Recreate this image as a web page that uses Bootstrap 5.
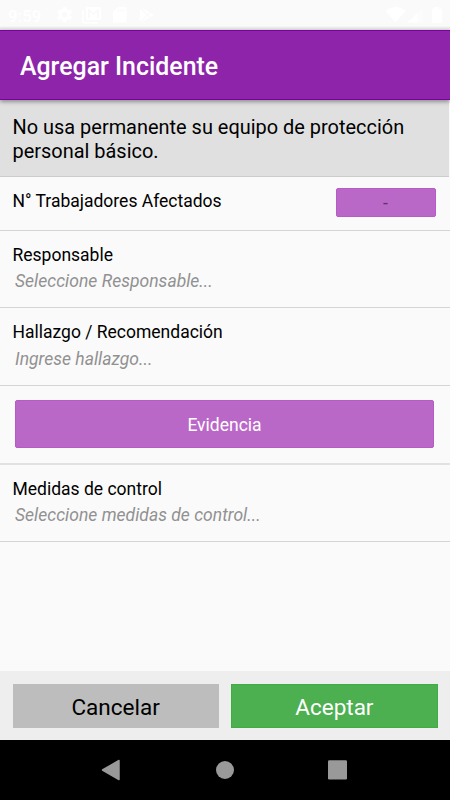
<!DOCTYPE html>
<html lang="es">
<head>
<meta charset="utf-8">
<meta name="viewport" content="width=device-width, initial-scale=1">
<title>Agregar Incidente</title>
<link href="https://cdn.jsdelivr.net/npm/bootstrap@5.3.0/dist/css/bootstrap.min.css" rel="stylesheet">
<style>
body{font-family:Roboto,"Liberation Sans",sans-serif;background:#fafafa;color:#000;height:800px;overflow:hidden}
.status-bar{height:30px;color:#fff;background:linear-gradient(#fafafa 26px,#f0f0f0 27px,#dcdcdc 30px)}
.status-bar svg{display:block;width:100%;height:30px}
.app-header{height:70px;padding:3px 20px 0;background:#8e24aa;color:#fff;border:solid #7b00a0;border-width:1px 0;box-shadow:0 2px 4px rgba(0,0,0,.36);z-index:1}
.app-title{font-size:24.9px;font-weight:500;line-height:30px}
.incident{height:77px;margin-right:1px;padding:15px 12.5px 0;background:#e0e0e0;border-bottom:1px solid #ccc;font-size:19.95px;line-height:24px}
.field{border-bottom:1px solid #d4d4d4;padding:0 12.5px;font-size:17.5px;line-height:24px}
.field-count{height:54px}
.field-text{height:77px;padding-top:12px}
.field-finding{height:78px}
.field-finding .hint{margin-top:3px}
.field-media{height:79px;padding:14px 16px 0 15px;border-bottom:2px solid #e2e2e2}
.hint{font-style:italic;color:#919191;padding-left:2.5px;margin-top:2px;letter-spacing:.02px}
.btn-lilac{--bs-btn-bg:#ba68c8;--bs-btn-color:#fff;--bs-btn-border-color:#b75cc7;--bs-btn-hover-bg:#ba68c8;--bs-btn-hover-color:#fff;border-radius:2px;padding:0;font-size:17.5px}
.btn-count{width:100px;height:29px;margin:11px 2px 0 0;font-size:17.5px;line-height:28px;color:#5d3464;border-color:#b85bc8}
.btn-media{height:48px;padding-top:2px}
.actions{height:69px;padding:12.5px 12.5px 0;gap:12.5px;background:#eee}
.actions .btn{height:44px;padding:2px 0 0;border-radius:0;font-size:22.5px;line-height:38px}
.btn-cancel{background:#bdbdbd;color:#000;border-color:#bdbdbd}
.btn-accept{background:#4caf50;color:#fff;border-color:#3fad44}
.sys-nav{height:60px;background:#000}
.sys-nav svg{display:block}
</style>
<script src="https://cdn.jsdelivr.net/npm/bootstrap@5.3.0/dist/js/bootstrap.bundle.min.js"></script>
</head>
<body class="d-flex flex-column m-0">
<div class="status-bar flex-shrink-0">
<svg viewBox="0 0 450 30" fill="#fff" aria-hidden="true">
<text x="8" y="21.500" font-size="17" font-weight="500">9:59</text>
<g transform="translate(55.500 5.700) scale(.75)"><path fill-rule="evenodd" d="M19.430 12.980a7.800 7.800 0 0 0 0-1.960l2.110-1.650a.5.5 0 0 0 .12-.64l-2-3.460a.5.5 0 0 0-.61-.22l-2.490 1a7.300 7.300 0 0 0-1.690-.98l-.38-2.650A.49.490 0 0 0 14 2h-4a.49.490 0 0 0-.49.420l-.38 2.650a7.700 7.700 0 0 0-1.690.98l-2.490-1a.49.490 0 0 0-.61.220l-2 3.460a.49.490 0 0 0 .12.640l2.110 1.650a7.900 7.900 0 0 0 0 1.960l-2.110 1.650a.5.5 0 0 0-.12.640l2 3.460a.5.5 0 0 0 .61.220l2.490-1c.52.400 1.080.73 1.690.98l.38 2.650A.49.490 0 0 0 10 22h4a.49.490 0 0 0 .49-.42l.38-2.650a7.700 7.700 0 0 0 1.690-.98l2.490 1a.49.490 0 0 0 .61-.22l2-3.460a.5.5 0 0 0-.12-.64zM12 15.500a3.500 3.500 0 1 1 0-7 3.500 3.500 0 0 1 0 7z"/></g>
<path fill-rule="evenodd" d="M87 7h13a1 1 0 0 1 1 1v11a1 1 0 0 1-1 1H87a1 1 0 0 1-1-1V8a1 1 0 0 1 1-1zm1 2v9h2v-6l3.500 3 3.500-3v6h2V9h-1l-4.500 4L89 9z"/><path d="M82 10h1.500v12H98v1.500H83.500A1.500 1.500 0 0 1 82 22z"/>
<path fill-rule="evenodd" d="M118 7h7a1.500 1.500 0 0 1 1.500 1.500v12.500a1.500 1.500 0 0 1-1.500 1.500h-10.500a1.500 1.500 0 0 1-1.500-1.500V12zm0 2v3h1.300V9zm2.600 0v3h1.300V9zm2.600 0v3h1.300V9z"/>
<path d="M140 8.500l6.500 6.500-6.500 6.500zM141 7.500l8.500 5-2 2zM141 22.500l8.500-5-2-2zM150.500 13l3.500 2-3.500 2-2-2z"/>
<path d="M385.500 11Q395.500 3 405.500 11L395.500 22.500z"/><path fill-opacity=".45" d="M407.500 22.500L422.500 8v14.500z"/><path d="M407.500 22.500L417.500 13v9.500z"/>
<path d="M434 8.500V7h5v1.500h2a1 1 0 0 1 1 1V22a1 1 0 0 1-1 1h-8a1 1 0 0 1-1-1V9.500a1 1 0 0 1 1-1z"/>
</svg>
</div>
<header class="app-header d-flex align-items-center flex-shrink-0 position-relative">
<h1 class="app-title m-0">Agregar Incidente</h1>
</header>
<main class="flex-grow-1">
<div class="incident">No usa permanente su equipo de protección<br>personal básico.</div>
<div class="field field-count d-flex justify-content-between align-items-start">
<div class="pt-2 mt-1">N° Trabajadores Afectados</div>
<button type="button" class="btn btn-lilac btn-count">-</button>
</div>
<div class="field field-text"><div>Responsable</div><div class="hint">Seleccione Responsable...</div></div>
<div class="field field-text field-finding"><div>Hallazgo / Recomendación</div><div class="hint">Ingrese hallazgo...</div></div>
<div class="field field-media"><button type="button" class="btn btn-lilac btn-media w-100">Evidencia</button></div>
<div class="field field-text"><div>Medidas de control</div><div class="hint">Seleccione medidas de control...</div></div>
</main>
<footer class="flex-shrink-0">
<div class="actions d-flex align-items-start">
<button type="button" class="btn btn-cancel flex-fill w-50">Cancelar</button>
<button type="button" class="btn btn-accept flex-fill w-50">Aceptar</button>
</div>
<nav class="sys-nav" aria-label="Sistema">
<svg width="450" height="60" fill="#999"><path d="M119 20.500v19L102.500 30z" stroke="#999" stroke-width="1.500" stroke-linejoin="round"/><circle cx="225" cy="30" r="9"/><rect x="328" y="20.300" width="19" height="19.200" rx="1.200"/></svg>
</nav>
</footer>
</body>
</html>
